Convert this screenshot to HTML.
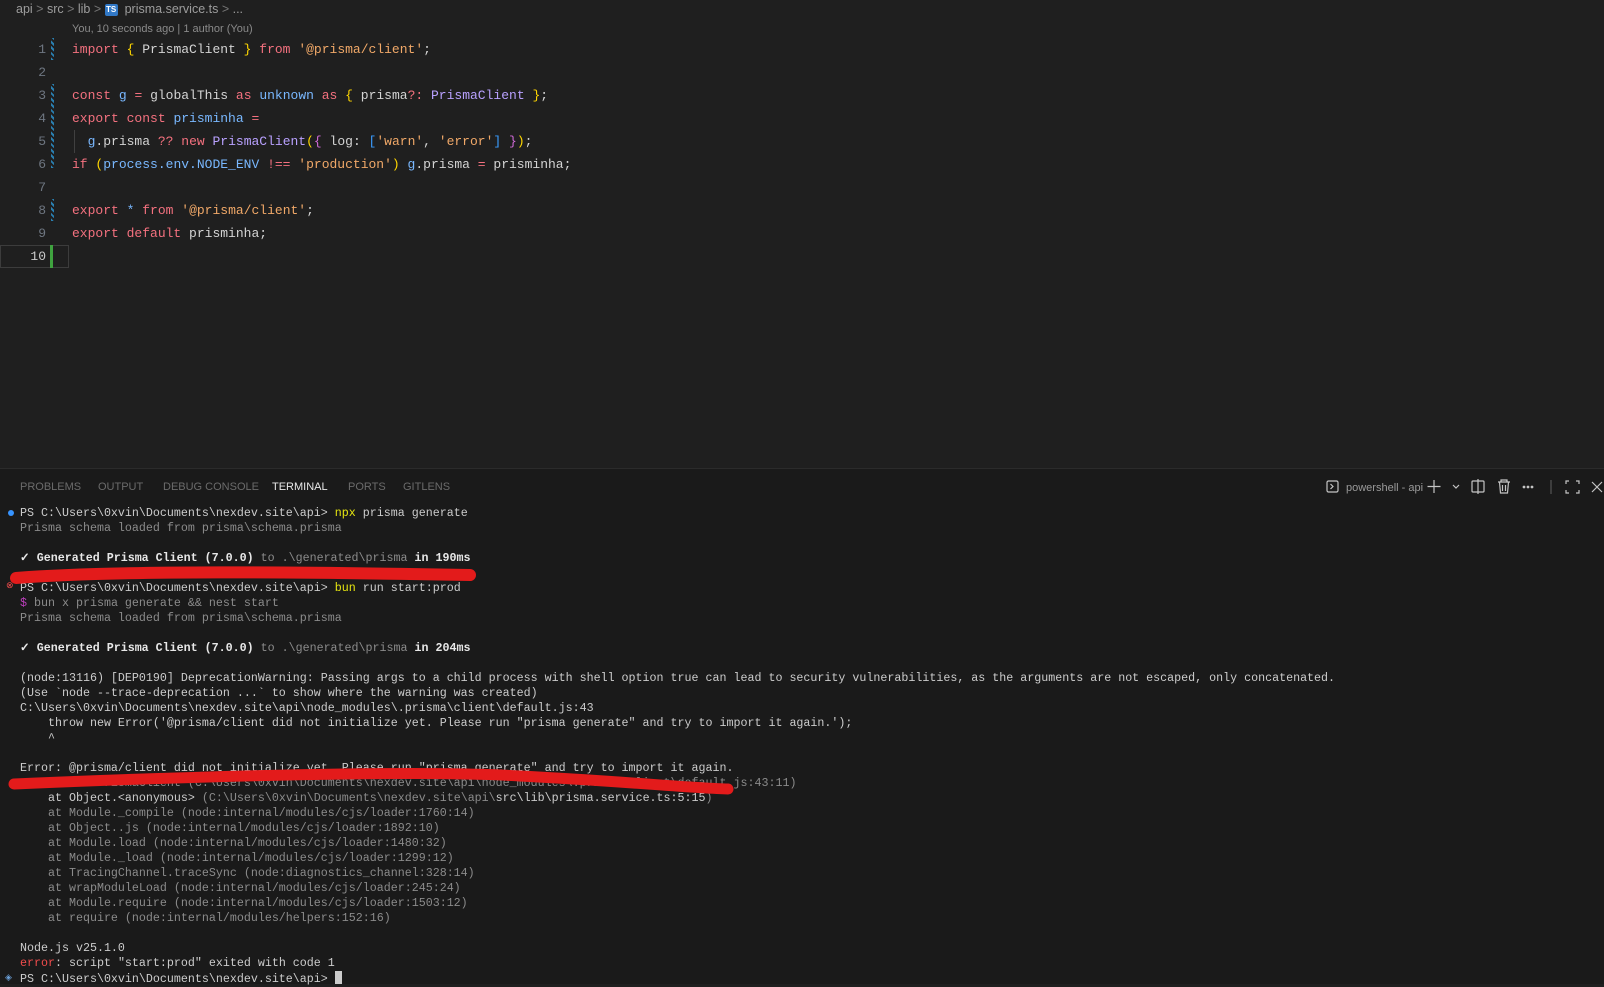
<!DOCTYPE html>
<html><head><meta charset="utf-8"><style>
*{margin:0;padding:0;box-sizing:border-box}
body{width:1604px;height:984px;background:#1f1f1f;overflow:hidden;position:relative;font-family:"Liberation Sans",sans-serif}
.a{position:absolute;white-space:pre}
.code{font-family:"Liberation Mono",monospace;font-size:13px;line-height:23px;color:#d4d4d4}
.ln{position:absolute;width:46px;text-align:right;font-family:"Liberation Mono",monospace;font-size:13px;line-height:23px;color:#6e7681}
.gb{position:absolute;left:51px;width:3px;background:repeating-linear-gradient(45deg,#2a7fb0 0 2px,#1f1f1f 2px 4px)}
.k{color:#f4717f}.y{color:#ffd700}.t{color:#b9a1ff}.b{color:#79b8ff}.s{color:#f0a868}.p{color:#d16ad8}.bb{color:#3a9cff}
.term{font-family:"Liberation Mono",monospace;font-size:11.67px;line-height:15px;color:#cccccc;left:20px}
.g{color:#8b8b8b}.w{color:#e8e8e8;font-weight:bold}.yl{color:#e5e510}.r{color:#f14c4c}.pu{color:#bc3fbc}
.tab{position:absolute;top:480px;font-size:11px;color:#6b6b6b;line-height:14px}
</style></head><body>
<div class="a" style="left:16px;top:1px;font-size:12.5px;color:#9d9d9d;line-height:16px">api <span style="color:#777">&gt;</span> src <span style="color:#777">&gt;</span> lib <span style="color:#777">&gt;</span> <span style="display:inline-block;background:#3178c6;color:#fff;font-size:8px;font-weight:bold;width:13px;height:12px;text-align:center;line-height:12px;border-radius:2px;vertical-align:1px">TS</span>&nbsp; prisma.service.ts <span style="color:#777">&gt;</span> ...</div>
<div class="a" style="left:72px;top:22px;font-size:11px;color:#8a8a8a;line-height:14px">You, 10 seconds ago | 1 author (You)</div>

<div class="gb" style="top:38px;height:22px"></div>
<div class="gb" style="top:84px;height:84px"></div>
<div class="gb" style="top:199px;height:22px"></div>
<div style="position:absolute;left:0;top:245px;width:69px;height:23px;border:1px solid #3c3c3c"></div>
<div style="position:absolute;left:50px;top:245px;width:3px;height:23px;background:#3fa33f"></div>

<div class="ln" style="top:38px">1</div>
<div class="ln" style="top:61px">2</div>
<div class="ln" style="top:84px">3</div>
<div class="ln" style="top:107px">4</div>
<div class="ln" style="top:130px">5</div>
<div class="ln" style="top:153px">6</div>
<div class="ln" style="top:176px">7</div>
<div class="ln" style="top:199px">8</div>
<div class="ln" style="top:222px">9</div>
<div class="ln" style="top:245px;color:#ccc">10</div>

<div class="a code" style="left:72px;top:38px"><span class="k">import</span> <span class="y">{</span> PrismaClient <span class="y">}</span> <span class="k">from</span> <span class="s">'@prisma/client'</span>;</div>
<div class="a code" style="left:72px;top:84px"><span class="k">const</span> <span class="b">g</span> <span class="k">=</span> globalThis <span class="k">as</span> <span class="b">unknown</span> <span class="k">as</span> <span class="y">{</span> prisma<span class="k">?:</span> <span class="t">PrismaClient</span> <span class="y">}</span>;</div>
<div class="a code" style="left:72px;top:107px"><span class="k">export</span> <span class="k">const</span> <span class="b">prisminha</span> <span class="k">=</span></div>
<div style="position:absolute;left:74px;top:130px;width:1px;height:23px;background:#404040"></div>
<div class="a code" style="left:72px;top:130px">  <span class="b">g</span>.prisma <span class="k">??</span> <span class="k">new</span> <span class="t">PrismaClient</span><span class="y">(</span><span class="p">{</span> log: <span class="bb">[</span><span class="s">'warn'</span>, <span class="s">'error'</span><span class="bb">]</span> <span class="p">}</span><span class="y">)</span>;</div>
<div class="a code" style="left:72px;top:153px"><span class="k">if</span> <span class="y">(</span><span class="b">process.env.NODE_ENV</span> <span class="k">!==</span> <span class="s">'production'</span><span class="y">)</span> <span class="b">g</span>.prisma <span class="k">=</span> prisminha;</div>
<div class="a code" style="left:72px;top:199px"><span class="k">export</span> <span class="b">*</span> <span class="k">from</span> <span class="s">'@prisma/client'</span>;</div>
<div class="a code" style="left:72px;top:222px"><span class="k">export</span> <span class="k">default</span> prisminha;</div>

<div style="position:absolute;left:0;top:468px;width:1604px;height:516px;background:#1a1a1a;border-top:1px solid #2b2b2b"></div>
<div class="tab" style="left:20px">PROBLEMS</div>
<div class="tab" style="left:98px">OUTPUT</div>
<div class="tab" style="left:163px">DEBUG CONSOLE</div>
<div class="tab" style="left:272px;color:#e8e8e8">TERMINAL</div>
<div class="tab" style="left:348px">PORTS</div>
<div class="tab" style="left:403px">GITLENS</div>

<svg style="position:absolute;left:1320px;top:476px" width="284" height="22" viewBox="0 0 284 22" fill="none" stroke="#c5c5c5" stroke-width="1.2">
<rect x="7" y="5" width="11" height="11" rx="1.5"/><path d="M10.5 8l2.5 2.5-2.5 2.5"/>
<text x="26" y="15" fill="#9a9a9a" stroke="none" font-family="Liberation Sans" font-size="11">powershell - api</text>
<path d="M114 4v13M107.5 10.5h13"/><path d="M133 9l3 3 3-3"/>
<rect x="152" y="5" width="12" height="11" rx="1"/><path d="M158 3v15"/>
<path d="M178 6h12M181 6V4h6v2M179.5 6l1 11h7l1-11M182.5 9v6M185.5 9v6"/>
<circle cx="204" cy="11" r=".8" fill="#c5c5c5"/><circle cx="208" cy="11" r=".8" fill="#c5c5c5"/><circle cx="212" cy="11" r=".8" fill="#c5c5c5"/>
<path d="M231 4v14" stroke="#555"/>
<path d="M246 8V5h3M256 5h3v3M259 14v3h-3M249 17h-3v-3"/>
<path d="M272 6l10 10M282 6l-10 10"/>
</svg>

<div style="position:absolute;left:8px;top:510px;width:6px;height:6px;border-radius:50%;background:#3794ff"></div>
<div class="a term" style="top:506px">PS C:\Users\0xvin\Documents\nexdev.site\api&gt; <span class="yl">npx</span> prisma generate</div>
<div class="a term g" style="top:521px">Prisma schema loaded from prisma\schema.prisma</div>
<div class="a term" style="top:551px"><span class="w">✓ Generated Prisma Client (7.0.0)</span> <span class="g">to .\generated\prisma</span> <span class="w">in 190ms</span></div>
<div class="a" style="left:6px;top:580px;font-size:9px;color:#f14c4c">⊗</div>
<div class="a term" style="top:581px">PS C:\Users\0xvin\Documents\nexdev.site\api&gt; <span class="yl">bun</span> run start:prod</div>
<div class="a term g" style="top:596px"><span class="pu">$</span> bun x prisma generate &amp;&amp; nest start</div>
<div class="a term g" style="top:611px">Prisma schema loaded from prisma\schema.prisma</div>
<div class="a term" style="top:641px"><span class="w">✓ Generated Prisma Client (7.0.0)</span> <span class="g">to .\generated\prisma</span> <span class="w">in 204ms</span></div>
<div class="a term" style="top:671px">(node:13116) [DEP0190] DeprecationWarning: Passing args to a child process with shell option true can lead to security vulnerabilities, as the arguments are not escaped, only concatenated.</div>
<div class="a term" style="top:686px">(Use `node --trace-deprecation ...` to show where the warning was created)</div>
<div class="a term" style="top:701px">C:\Users\0xvin\Documents\nexdev.site\api\node_modules\.prisma\client\default.js:43</div>
<div class="a term" style="top:716px">    throw new Error('@prisma/client did not initialize yet. Please run "prisma generate" and try to import it again.');</div>
<div class="a term" style="top:731px">    ^</div>
<div class="a term" style="top:761px">Error: @prisma/client did not initialize yet. Please run "prisma generate" and try to import it again.</div>
<div class="a term g" style="top:776px">    at new PrismaClient (C:\Users\0xvin\Documents\nexdev.site\api\node_modules\.prisma\client\default.js:43:11)</div>
<div class="a term g" style="top:791px">    <span style="color:#ccc">at Object.&lt;anonymous&gt;</span> (C:\Users\0xvin\Documents\nexdev.site\api\<span style="color:#ccc">src\lib\prisma.service.ts:5:15</span>)</div>
<div class="a term g" style="top:806px">    at Module._compile (node:internal/modules/cjs/loader:1760:14)</div>
<div class="a term g" style="top:821px">    at Object..js (node:internal/modules/cjs/loader:1892:10)</div>
<div class="a term g" style="top:836px">    at Module.load (node:internal/modules/cjs/loader:1480:32)</div>
<div class="a term g" style="top:851px">    at Module._load (node:internal/modules/cjs/loader:1299:12)</div>
<div class="a term g" style="top:866px">    at TracingChannel.traceSync (node:diagnostics_channel:328:14)</div>
<div class="a term g" style="top:881px">    at wrapModuleLoad (node:internal/modules/cjs/loader:245:24)</div>
<div class="a term g" style="top:896px">    at Module.require (node:internal/modules/cjs/loader:1503:12)</div>
<div class="a term g" style="top:911px">    at require (node:internal/modules/helpers:152:16)</div>
<div class="a term" style="top:941px">Node.js v25.1.0</div>
<div class="a term" style="top:956px"><span class="r">error</span>: script "start:prod" exited with code 1</div>
<div class="a" style="left:5px;top:972px;font-size:9px;color:#6a9fd8">◈</div>
<div class="a term" style="top:971px">PS C:\Users\0xvin\Documents\nexdev.site\api&gt; <span style="display:inline-block;width:7px;height:13px;background:#ccc;vertical-align:-2px"></span></div>

<svg style="position:absolute;left:0;top:0" width="1604" height="984">
<path d="M16 578 C120 570 300 572 470 575" stroke="#e31b1b" stroke-width="12" stroke-linecap="round" fill="none"/>
<path d="M14 784 C200 776 420 770 520 776 C620 781 690 788 728 789" stroke="#e31b1b" stroke-width="11" stroke-linecap="round" fill="none"/>
</svg>
</body></html>
